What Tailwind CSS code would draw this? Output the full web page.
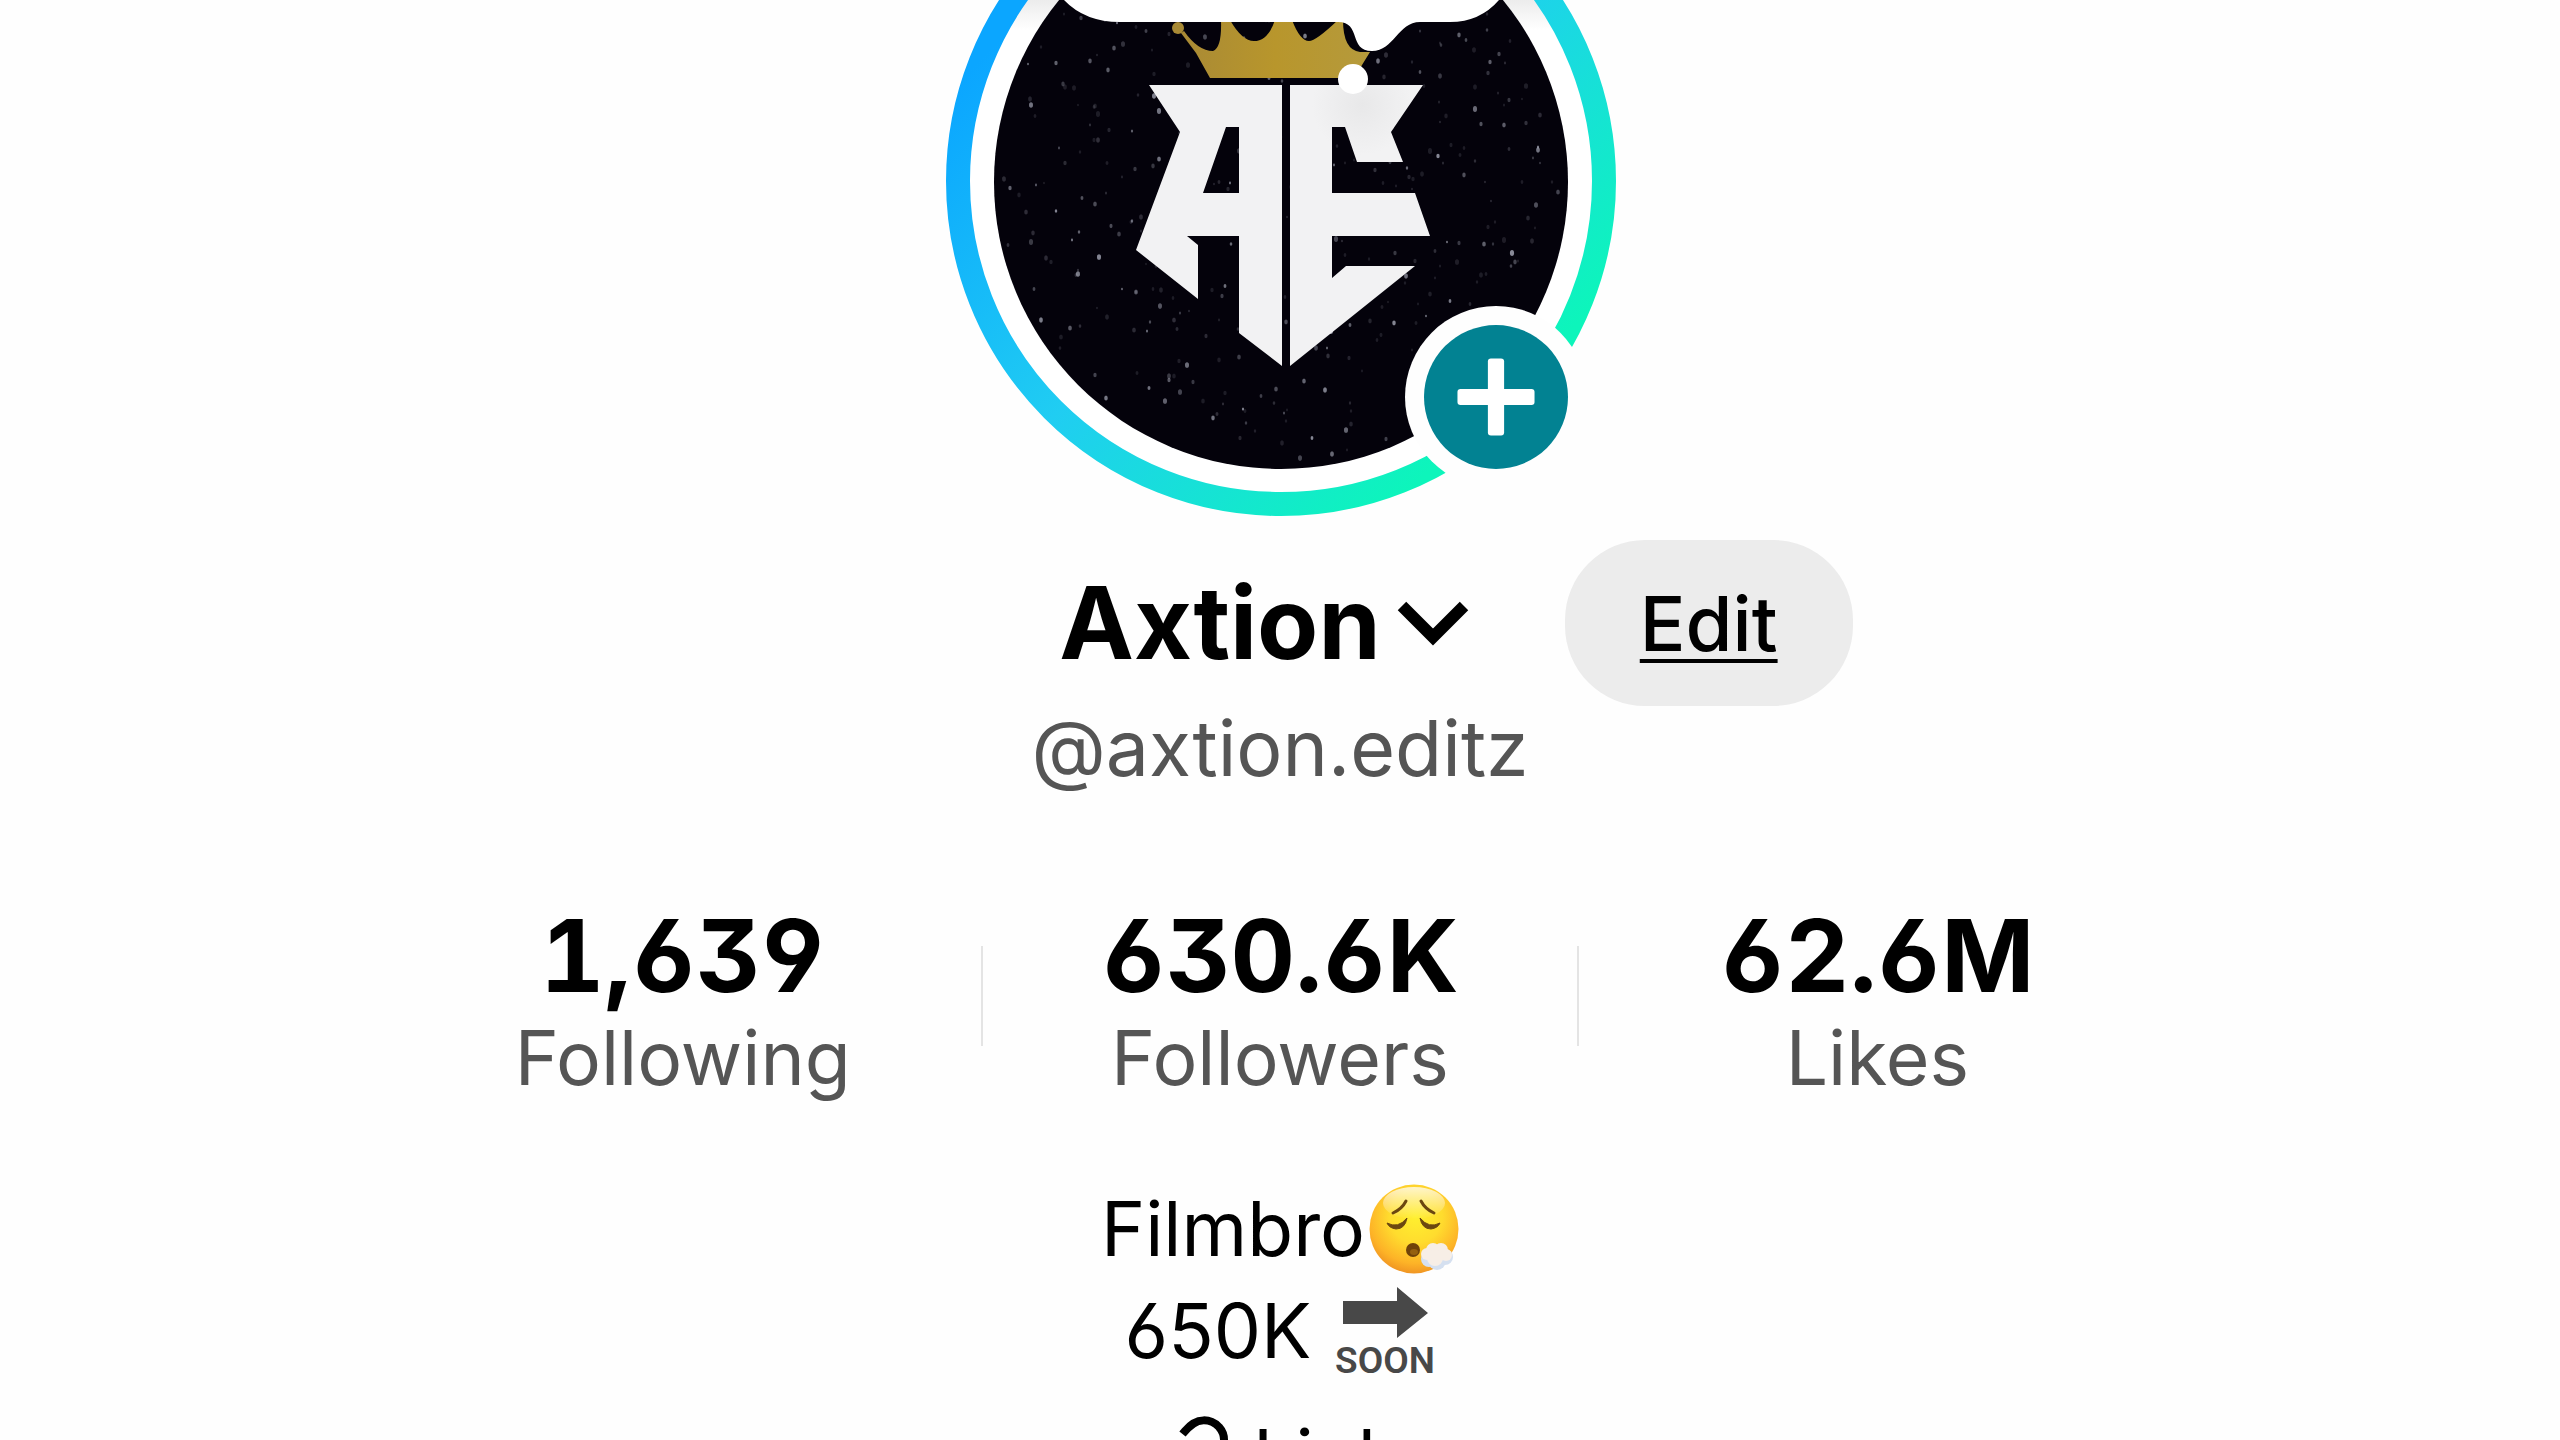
<!DOCTYPE html>
<html lang="en">
<head>
  <meta charset="UTF-8">
  <meta name="viewport" content="width=device-width, initial-scale=1.0">
  <title>Axtion (@axtion.editz)</title>
  <script src="https://cdn.jsdelivr.net/npm/@tailwindcss/browser@4"></script>
</head>
<body class="bg-[#fefefe] h-screen overflow-hidden font-['Inter',sans-serif] text-black [font-feature-settings:'cv03','cv04','cv09']">

  <main class="flex flex-col items-center">

    <!-- Avatar -->
    <div class="relative w-[680px]">
      <svg id="avatar" class="block w-full" viewBox="940 0 680 520" role="img" aria-label="Axtion profile photo">
        <defs>
          <linearGradient id="ring" gradientUnits="userSpaceOnUse" x1="940" y1="100" x2="1370" y2="530">
            <stop offset="0" stop-color="#0ba6ff"/>
            <stop offset="0.5" stop-color="#20cdf2"/>
            <stop offset="1" stop-color="#0df5bb"/>
          </linearGradient>
          <linearGradient id="gap" gradientUnits="userSpaceOnUse" x1="0" y1="0" x2="0" y2="30">
            <stop offset="0" stop-color="#ececec"/>
            <stop offset="1" stop-color="#ffffff"/>
          </linearGradient>
          <linearGradient id="gold" x1="0" y1="0" x2="1" y2="0">
            <stop offset="0" stop-color="#a98a35"/>
            <stop offset="0.5" stop-color="#b8962c"/>
            <stop offset="1" stop-color="#b59a3c"/>
          </linearGradient>
          <radialGradient id="shade" gradientUnits="userSpaceOnUse" cx="1362" cy="105" r="50">
            <stop offset="0" stop-color="#e8e8e9"/>
            <stop offset="1" stop-color="#f2f2f3"/>
          </radialGradient>
        </defs>
        <circle cx="1281" cy="181" r="323" fill="url(#gap)" stroke="url(#ring)" stroke-width="24"/>
        <circle cx="1281" cy="182" r="287" fill="#04020b"/>
        <g id="stars"></g>
        <!-- crown -->
        <path fill="url(#gold)" d="M1210 78 L1196 53 L1181 33 L1184 31 Q1198 51 1213 51 Q1222 48 1221 20 L1230 20 Q1242 41 1254 41 Q1268 41 1275 20 L1292 20 Q1300 41 1309 41 Q1316 41 1338 20 L1343 20 Q1343 50 1360 52 L1370 52 L1354 78 Z"/>
        <circle cx="1178" cy="28" r="6" fill="#a98a35"/>
        <!-- monogram -->
        <path fill="#f2f2f3" fill-rule="evenodd" d="M1149 85 H1282 V366 L1239 333 V236 H1187 L1198 245 V299 L1136 250 L1180 132 Z M1226 127 L1203 193 H1239 V127 Z"/>
        <path fill="url(#shade)" d="M1290 85 H1423 L1391 132 L1403 162 H1357 L1345 127 H1332 V193 H1415 L1430 236 H1332 V278 L1346 266 H1415 L1290 366 Z"/>
        <!-- thought bubble -->
        <path fill="#ffffff" d="M1064 0 Q1085 22 1120 22 H1338 C1362 22 1348 51 1372 51 C1394 51 1398 22 1420 22 H1450 Q1480 22 1499 0 Z"/>
        <circle cx="1353" cy="79" r="15" fill="#ffffff"/>
      </svg>
      <button type="button" aria-label="Add to story" class="absolute right-[33px] bottom-[32px] size-[182px] rounded-full bg-[#fefefe] p-[19px]">
        <svg class="block size-full" viewBox="0 0 142 142" aria-hidden="true">
          <circle cx="71" cy="71" r="71" fill="#028292"/>
          <rect x="33" y="63" width="76" height="16" rx="3" fill="#ffffff"/>
          <rect x="63" y="33" width="16" height="76" rx="3" fill="#ffffff"/>
        </svg>
      </button>
    </div>

    <!-- Name -->
    <div class="mt-5 grid w-full grid-cols-[1fr_auto_1fr] items-center">
      <button type="button" class="col-start-2 flex items-center gap-4 pr-8">
        <h1 class="text-[100px] leading-[120px] font-bold">Axtion</h1>
        <svg class="w-[72px]" viewBox="0 0 72 48" fill="none" stroke="#000000" stroke-width="12" aria-hidden="true">
          <path d="M5 7 L36 38 L67 7"/>
        </svg>
      </button>
      <a href="#" class="ml-16 flex h-[166px] w-[288px] items-center justify-center rounded-[80px] bg-[#ececec] text-[76px] font-medium underline decoration-4 underline-offset-8">Edit</a>
    </div>
    <p class="text-[77px] leading-[84px] text-[#555555]">@axtion.editz</p>

    <!-- Stats -->
    <div class="mt-29 grid w-[70%] grid-cols-3 text-center">
      <a href="#" class="relative">
        <span class="block text-[100px] leading-[100px] font-bold tabular-nums">1,639</span>
        <span class="block text-[75px] leading-[104px] text-[#555555]">Following</span>
      </a>
      <a href="#" class="relative before:absolute before:top-10 before:left-0 before:h-25 before:w-0.5 before:bg-[#e4e4e4] after:absolute after:top-10 after:right-0 after:h-25 after:w-0.5 after:bg-[#e4e4e4]">
        <span class="block text-[100px] leading-[100px] font-bold tabular-nums">630.6K</span>
        <span class="block text-[75px] leading-[104px] text-[#555555]">Followers</span>
      </a>
      <a href="#" class="relative">
        <span class="block text-[100px] leading-[100px] font-bold tabular-nums">62.6M</span>
        <span class="block text-[75px] leading-[104px] text-[#555555]">Likes</span>
      </a>
    </div>

    <!-- Bio -->
    <div class="mt-17 text-[75px] leading-[102px]">
      <p class="flex items-center justify-center gap-1">
        Filmbro
        <svg class="size-[90px]" viewBox="0 0 90 90" fill="none" role="img" aria-label="Face exhaling">
          <defs>
            <radialGradient id="face" cx="0.52" cy="0.36" r="0.66">
              <stop offset="0" stop-color="#fff02f"/>
              <stop offset="0.45" stop-color="#ffdc2e"/>
              <stop offset="0.8" stop-color="#fdb327"/>
              <stop offset="1" stop-color="#ee9022"/>
            </radialGradient>
            <linearGradient id="shine" x1="0" y1="0" x2="0" y2="1">
              <stop offset="0" stop-color="#ffffff" stop-opacity="0.75"/>
              <stop offset="1" stop-color="#ffffff" stop-opacity="0"/>
            </linearGradient>
          </defs>
          <circle cx="45" cy="45" r="44.5" fill="url(#face)"/>
          <ellipse cx="45" cy="19" rx="31" ry="16" fill="url(#shine)"/>
          <g stroke="#6b4710" stroke-width="3" stroke-linecap="round">
            <path d="M24 29 Q33 25 37 17"/>
            <path d="M52 17 Q56 25 65 29"/>
          </g>
          <path d="M18 39 Q29 45 38 34 Q36 45 27 45 Q20 44 18 39 Z" fill="#6b4710" stroke="#6b4710" stroke-width="1"/>
          <path d="M51 34 Q60 45 71 39 Q69 44 62 45 Q53 45 51 34 Z" fill="#6b4710" stroke="#6b4710" stroke-width="1"/>
          <circle cx="44" cy="66" r="7" fill="#6f4209"/>
          <ellipse cx="45" cy="68" rx="4" ry="3" fill="#94600f"/>
          <g fill="#d5e0f0">
            <circle cx="60" cy="75" r="8"/>
            <circle cx="68" cy="77" r="9"/>
            <circle cx="76" cy="73" r="8"/>
          </g>
          <g fill="#f7eee6">
            <circle cx="58" cy="70" r="6"/>
            <circle cx="64" cy="66" r="7"/>
            <circle cx="72" cy="66" r="7"/>
            <circle cx="77" cy="71" r="6"/>
            <circle cx="66" cy="74" r="8"/>
          </g>
        </svg>
      </p>
      <p class="flex items-center justify-center gap-6">
        650K
        <svg class="h-[98px] w-[100px]" viewBox="-1 -5 100 98" fill="#484848" role="img" aria-label="Soon">
          <path d="M7 14 H61 V0 L92 26 L61 51 V37 H7 Z"/>
          <text x="49" y="86" text-anchor="middle" font-family="Roboto, sans-serif" font-size="37" font-weight="600">SOON</text>
        </svg>
      </p>
      <a href="#" class="mt-6 flex items-center justify-center gap-5">
        <svg class="size-[72px] overflow-visible" viewBox="0 0 72 72" fill="none" stroke="#000000" stroke-width="8" stroke-linecap="square" aria-hidden="true">
          <path d="M24 10 C36 -5 50 -2 58 6 C66 15 64 28 55 37 L47 45"/>
          <path d="M44 30 L26 48 C18 56 22 66 32 68"/>
        </svg>
        Link
      </a>
    </div>

  </main>

  <script>
    // Scatter faint stars over the avatar background
    const stars = document.getElementById('stars');
    let seed = 7;
    const rand = () => {
      seed = (seed * 16807) % 2147483647;
      return seed / 2147483647;
    };
    for (let i = 0; i < 480; i++) {
      const angle = rand() * Math.PI * 2;
      const dist = Math.sqrt(rand()) * 282;
      const star = document.createElementNS('http://www.w3.org/2000/svg', 'ellipse');
      const size = 0.9 + rand() * 1.2;
      star.setAttribute('cx', Math.round(1281 + Math.cos(angle) * dist));
      star.setAttribute('cy', Math.round(182 + Math.sin(angle) * dist));
      star.setAttribute('rx', size);
      star.setAttribute('ry', size * 1.4);
      star.setAttribute('fill', '#b9bccb');
      star.setAttribute('opacity', 0.14 + Math.pow(rand(), 3) * 0.6);
      stars.appendChild(star);
    }
  </script>
</body>
</html>
